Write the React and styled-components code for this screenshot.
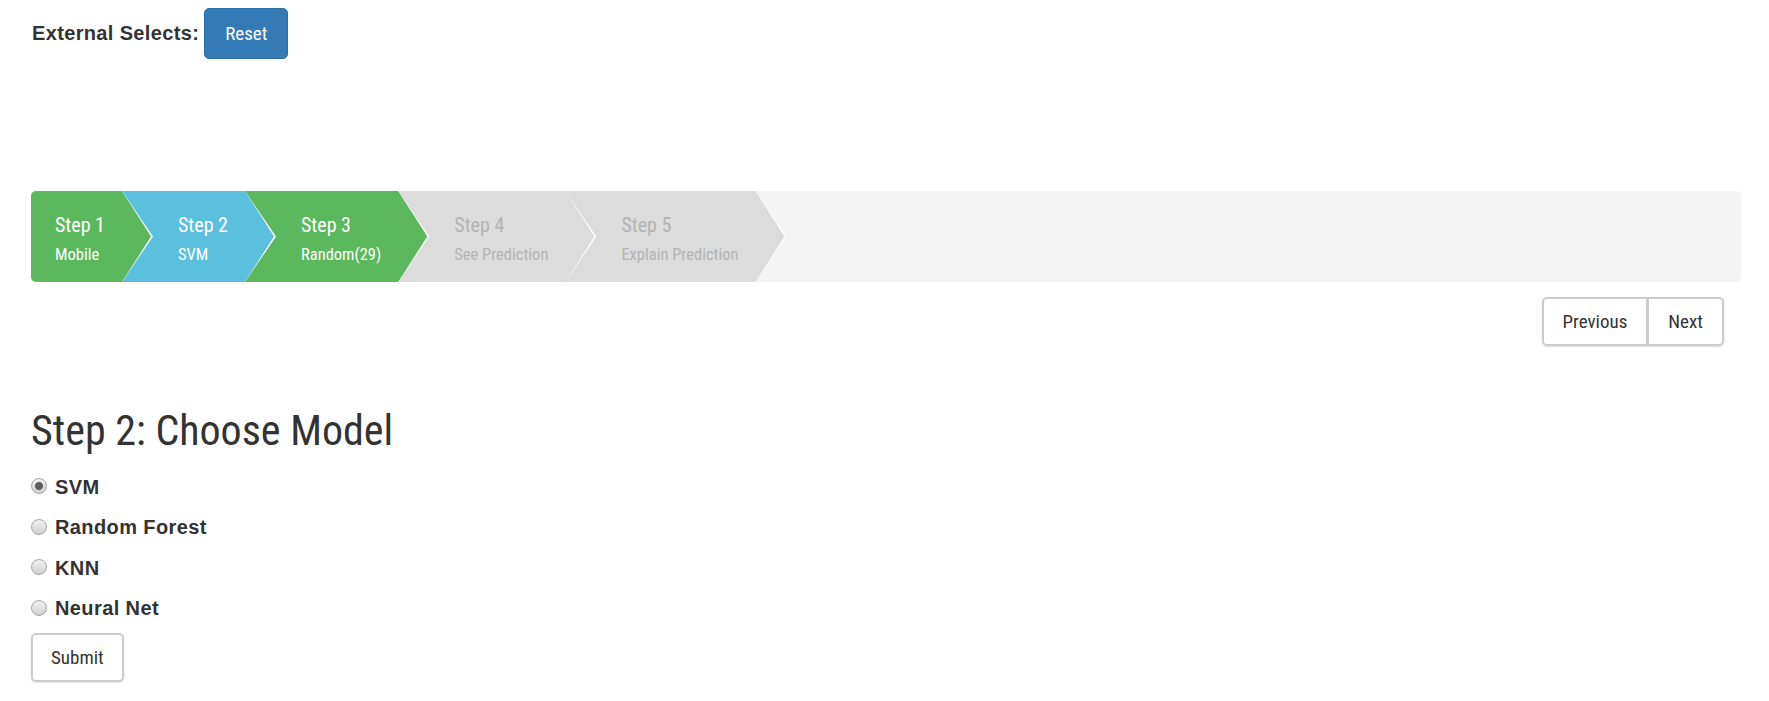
import React, { useState } from "react";
import styled, { createGlobalStyle } from "styled-components";

const narrow = `"Roboto Condensed", "Liberation Sans Narrow", "DejaVu Sans Condensed", sans-serif`;

const steps = [
  { title: "Step 1", label: "Mobile", state: "done" },
  { title: "Step 2", label: "SVM", state: "current" },
  { title: "Step 3", label: "Random(29)", state: "done" },
  { title: "Step 4", label: "See Prediction", state: "todo" },
  { title: "Step 5", label: "Explain Prediction", state: "todo" },
];

const models = ["SVM", "Random Forest", "KNN", "Neural Net"];

const colors = {
  done: { bg: "#5cb85c", fg: "#fff" },
  current: { bg: "#5bc0de", fg: "#fff" },
  todo: { bg: "#dcdcdc", fg: "#b3b3b3" },
};

function App() {
  const [model, setModel] = useState("SVM");

  return (
    <Page>
      <GlobalStyle />
      <Header>
        <HeaderLabel>External Selects:</HeaderLabel>
        <ResetButton>Reset</ResetButton>
      </Header>

      <Wizard>
        {steps.map((s, i) => (
          <Step key={s.title} $z={steps.length - i}>
            <StepBody
              $bg={colors[s.state].bg}
              $fg={colors[s.state].fg}
              $first={i === 0}
            >
              <StepTitle>{s.title}</StepTitle>
              <StepLabel>{s.label}</StepLabel>
            </StepBody>
          </Step>
        ))}
      </Wizard>

      <Nav>
        <NavGroup>
          <NavButton>Previous</NavButton>
          <NavButton>Next</NavButton>
        </NavGroup>
      </Nav>

      <Title>Step 2: Choose Model</Title>
      <Options>
        {models.map((m) => (
          <Option key={m}>
            <Radio
              type="radio"
              name="model"
              checked={model === m}
              onChange={() => setModel(m)}
            />
            {m}
          </Option>
        ))}
      </Options>
      <Button>Submit</Button>
    </Page>
  );
}

export default App;

const GlobalStyle = createGlobalStyle`
  body {
    margin: 0;
    background: #fff;
    color: #333;
    font-family: "Liberation Sans", Arial, sans-serif;
  }
`;

const Page = styled.div`
  padding: 8px 28px 40px 31px;
`;

const Header = styled.div`
  display: flex;
  align-items: center;
  gap: 5px;
`;

const HeaderLabel = styled.span`
  font-size: 20px;
  font-weight: bold;
  letter-spacing: 0.35px;
  padding-left: 1px;
`;

const ResetButton = styled.button`
  height: 51px;
  padding: 0 20px;
  font-family: ${narrow};
  font-size: 19px;
  color: #fff;
  background: #337ab7;
  border: 1px solid #2e6da4;
  border-radius: 5px;
  cursor: pointer;
`;

const Wizard = styled.div`
  display: flex;
  height: 91px;
  margin-top: 132px;
  background: #f4f4f4;
  border-radius: 5px;
  overflow: hidden;
`;

const Step = styled.div`
  position: relative;
  z-index: ${(p) => p.$z};
  display: flex;
  flex: none;
  margin-right: -31px;
  padding-right: 2px;
  background: #fff;
  clip-path: polygon(0 0, calc(100% - 31px) 0, 100% 50%, calc(100% - 31px) 100%, 0 100%);
`;

const StepBody = styled.div`
  display: flex;
  flex-direction: column;
  justify-content: center;
  padding: 5px 46px 0 ${(p) => (p.$first ? "24px" : "56px")};
  background: ${(p) => p.$bg};
  color: ${(p) => p.$fg};
  font-family: ${narrow};
  clip-path: polygon(0 0, calc(100% - 29px) 0, 100% 50%, calc(100% - 29px) 100%, 0 100%);
`;

const StepTitle = styled.div`
  font-size: 20px;
  line-height: 24px;
  white-space: nowrap;
`;

const StepLabel = styled.div`
  margin-top: 8px;
  font-size: 16.5px;
  line-height: 20px;
  white-space: nowrap;
`;

const Nav = styled.div`
  display: flex;
  justify-content: flex-end;
  margin-top: 15px;
  padding-right: 17px;
`;

const NavGroup = styled.div`
  display: flex;
  border-radius: 5px;
  box-shadow: 0 1px 2px rgba(0, 0, 0, 0.15);
`;

const Button = styled.button`
  height: 49px;
  padding: 0 18px;
  font-family: ${narrow};
  font-size: 19px;
  color: #333;
  background: #fff;
  border: 2px solid #ccc;
  border-radius: 5px;
  box-shadow: 0 1px 2px rgba(0, 0, 0, 0.12);
  cursor: pointer;
  margin-top: 4px;
`;

const NavButton = styled(Button)`
  margin-top: 0;
  box-shadow: none;
  padding: 0 19px;

  &:first-child {
    border-top-right-radius: 0;
    border-bottom-right-radius: 0;
  }
  & + & {
    margin-left: -1px;
    border-top-left-radius: 0;
    border-bottom-left-radius: 0;
  }
`;

const Title = styled.h2`
  margin: 61px 0 0;
  font-family: ${narrow};
  font-weight: normal;
  font-size: 42px;
  line-height: 47px;
  color: #333;
`;

const Options = styled.div`
  margin-top: 13px;
`;

const Option = styled.label`
  display: flex;
  align-items: center;
  gap: 8px;
  height: 40.5px;
  font-size: 20px;
  font-weight: bold;
  letter-spacing: 0.4px;
  cursor: pointer;
`;

const Radio = styled.input`
  appearance: none;
  width: 16px;
  height: 16px;
  margin: 0 0 2px;
  border: 1px solid #a6a6a6;
  border-radius: 50%;
  background: linear-gradient(#f2f2f2, #cfcfcf);

  &:checked {
    background: radial-gradient(circle, #5e5e5e 0 3.5px, transparent 4.5px),
      linear-gradient(#f2f2f2, #cfcfcf);
  }
`;
